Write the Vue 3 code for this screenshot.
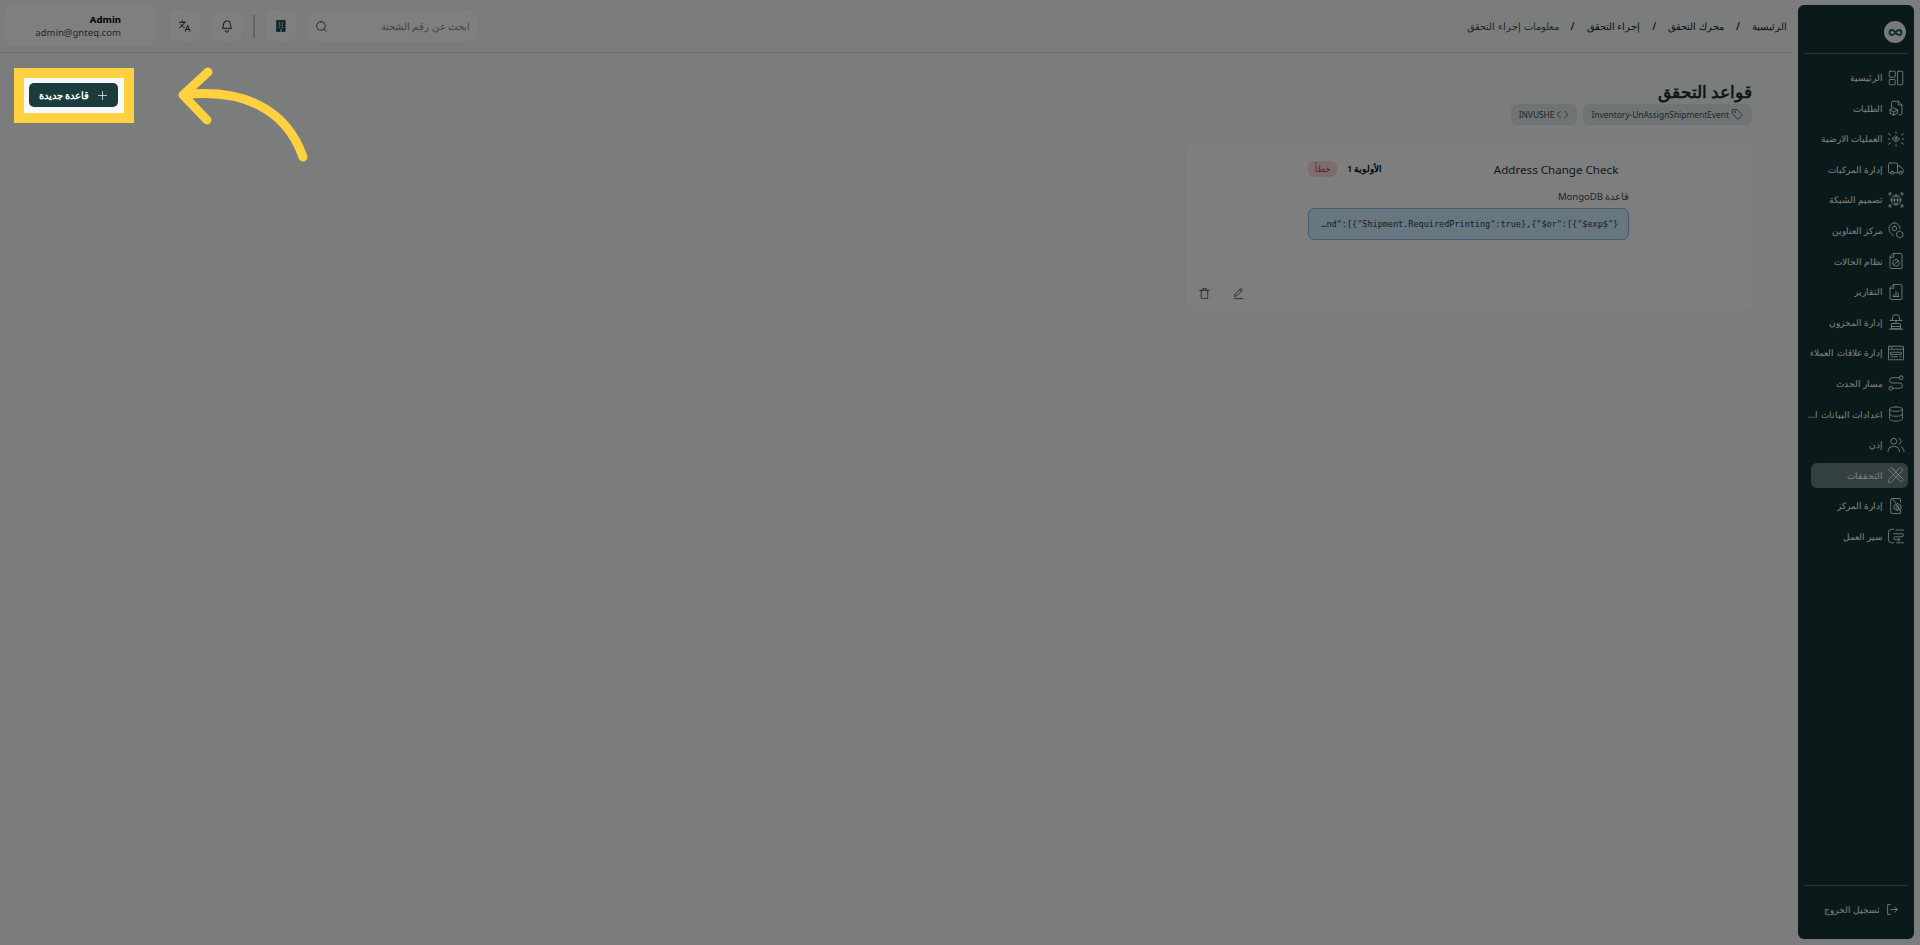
<script setup>
const menu = [
  { label: "الرئيسية", d: "M4 3h6a1 1 0 0 1 1 1v6a1 1 0 0 1-1 1H4a1 1 0 0 1-1-1V4a1 1 0 0 1 1-1zM4 14h6a1 1 0 0 1 1 1v5a1 1 0 0 1-1 1H4a1 1 0 0 1-1-1v-5a1 1 0 0 1 1-1zM15 3h5a1 1 0 0 1 1 1v16a1 1 0 0 1-1 1h-5a1 1 0 0 1-1-1V4a1 1 0 0 1 1-1z" },
  { label: "الطلبات", d: "M6 11V5a2 2 0 0 1 2-2h7l5 5v11a2 2 0 0 1-2 2h-2M15 3v5h5M9 12l5 2.500v4.500l-5 2.500-5-2.500v-4.500zM4 14.500l5 2.500 5-2.500M9 17v4.500" },
  { label: "العمليات الارضية", d: "M12 8l5 4-5 4-5-4zM12 10.500a1.500 1.500 0 1 0 0 3 1.500 1.500 0 0 0 0-3zM2 5l3 2M22 5l-3 2M2 19l3-2M22 19l-3-2M2 12h1.500M20.500 12H22M12 2.500v2M12 19.500v2" },
  { label: "إدارة المركبات", d: "M4 4h9a1 1 0 0 1 1 1v12H9M5 17H3.500A1.500 1.500 0 0 1 2 15.500V6a2 2 0 0 1 2-2M14 8h3.500l4 5v4H20M16 17h-2M7 15a2 2 0 1 0 0 4 2 2 0 0 0 0-4zM18 15a2 2 0 1 0 0 4 2 2 0 0 0 0-4z" },
  { label: "تصميم الشبكة", d: "M12 5.500a6.500 6.500 0 1 0 0 13 6.500 6.500 0 0 0 0-13zM5.500 12h13M12 5.500c-3.500 4-3.500 9 0 13M12 5.500c3.500 4 3.500 9 0 13M4 2.500a1.500 1.500 0 1 0 0 3 1.500 1.500 0 0 0 0-3zM20 2.500a1.500 1.500 0 1 0 0 3 1.500 1.500 0 0 0 0-3zM4 18.500a1.500 1.500 0 1 0 0 3 1.500 1.500 0 0 0 0-3zM20 18.500a1.500 1.500 0 1 0 0 3 1.500 1.500 0 0 0 0-3z" },
  { label: "مركز العناوين", d: "M10 2.500a7.500 7.500 0 0 0-7.500 7.500c0 4 3 7 6 9.500M17.500 10A7.500 7.500 0 0 0 10 2.500M10 7a3 3 0 1 0 0 6 3 3 0 0 0 0-6zM17 13.500l4 2.300v4.400l-4 2.300-4-2.300v-4.400z" },
  { label: "نظام الحالات", d: "M9 2h10a1 1 0 0 1 1 1v18a1 1 0 0 1-1 1H5a1 1 0 0 1-1-1V7zM9 2v5H4M12 10a4.500 4.500 0 1 0 0 9 4.500 4.500 0 0 0 0-9zM9 17l6-5" },
  { label: "التقارير", d: "M9 2h9a2 2 0 0 1 2 2v16a2 2 0 0 1-2 2H6a2 2 0 0 1-2-2V7zM9 2v5H4M8 18h8M9 15.500V18M12 11v7M15 13.500V18" },
  { label: "إدارة المخزون", d: "M7 10V7a5 5 0 0 1 10 0v3M4 10h16M12 10v3M7 14h10a1 1 0 0 1 1 1v6H6v-6a1 1 0 0 1 1-1zM6 18h12M3 21.500h18" },
  { label: "إدارة علاقات العملاء", d: "M3 3h18a1 1 0 0 1 1 1v16a1 1 0 0 1-1 1H3a1 1 0 0 1-1-1V4a1 1 0 0 1 1-1zM2 7h20M6 5h1M5 11h14v3H5zM5 17h9M17 17h2" },
  { label: "مسار الحدث", d: "M19 2.500a2.500 2.500 0 1 0 0 5 2.500 2.500 0 0 0 0-5zM5 16.500a2.500 2.500 0 1 0 0 5 2.500 2.500 0 0 0 0-5zM16.500 5H7a3.500 3.500 0 0 0 0 7h10a3.500 3.500 0 0 1 0 7H7.500" },
  { label: "اعدادات البيانات الرئيسية", d: "M12 2.500c-4.700 0-8.500 1.300-8.500 3s3.800 3 8.500 3 8.500-1.300 8.500-3-3.800-3-8.500-3zM3.500 5.500v13c0 1.700 3.800 3 8.500 3s8.500-1.300 8.500-3v-13M3.500 12c0 1.700 3.800 3 8.500 3s8.500-1.300 8.500-3" },
  { label: "إذن", d: "M9 3a4 4 0 1 0 0 8 4 4 0 0 0 0-8zM1.500 21v-2a6 6 0 0 1 6-5h3a6 6 0 0 1 6 5v2M16 3.200a4 4 0 0 1 0 7.600M19 14.500a6 6 0 0 1 3.500 4.500v2" },
  { label: "التحققات", active: true, d: "M6 2l16 16-3.500 3.500L2.500 5.500zM18 2l3.500 3.500L5.500 21.500 2 22l.5-3.500zM9 5l-2 2M12 8l-2 2M15 11l-2 2M18 14l-2 2" },
  { label: "إدارة المركز", d: "M7 2h9a2 2 0 0 1 2 2v3M18 19v1a2 2 0 0 1-2 2H7a2 2 0 0 1-2-2V4a2 2 0 0 1 2-2zM15 9l1 1.700 2-.2 1 1.500-1 1.500.9 1.500-1 1.500-2-.2-.9 1.700h-2l-1-1.700-2 .2-1-1.500.9-1.500-.9-1.500 1-1.500 2 .2 1-1.700zM14 12a2 2 0 1 0 0 4 2 2 0 0 0 0-4z" },
  { label: "سير العمل", d: "M9 3H6a4 4 0 0 0-4 4v10a4 4 0 0 0 4 4h3M12 4h10M9 9h11a2 2 0 0 1 0 4H11a2 2 0 0 0 0 4h6M15 15l2 2-2 2M13 21h9" },
];

const crumbs = ["الرئيسية", "محرك التحقق", "إجراء التحقق"];
const ruleCode = '…nd":[{"Shipment.RequiredPrinting":true},{"$or":[{"$exp$"}';
</script>

<template>
  <div class="page" dir="rtl">
    <aside class="sidebar">
      <div class="logo-row">
        <span class="logo">
          <svg viewBox="0 0 24 24" width="15" height="15"><path d="M12 12c-2-3-3.500-4-5.500-4a4 4 0 0 0 0 8c2 0 3.500-1 5.500-4s3.500-4 5.500-4a4 4 0 0 1 0 8c-2 0-3.500-1-5.500-4z" /></svg>
        </span>
      </div>

      <nav class="menu">
        <a v-for="item in menu" :key="item.label" class="menu-item" :class="{ active: item.active }">
          <svg class="menu-icon" viewBox="0 0 24 24"><path :d="item.d" /></svg>
          <span class="menu-label">{{ item.label }}</span>
        </a>
      </nav>

      <div class="logout">
        <svg class="logout-icon" viewBox="0 0 24 24"><path d="M8 3H3v18h5M9 12h12M16 7l5 5-5 5" /></svg>
        <span>تسجيل الخروج</span>
      </div>
    </aside>

    <main class="main">
      <header class="topbar">
        <ol class="crumbs">
          <template v-for="c in crumbs" :key="c">
            <li>{{ c }}</li>
            <li class="sep">/</li>
          </template>
          <li class="current">معلومات إجراء التحقق</li>
        </ol>

        <div class="tools">
          <label class="search">
            <span class="placeholder">ابحث عن رقم الشحنة</span>
            <svg class="search-icon" viewBox="0 0 24 24"><path d="M11 3a8 8 0 1 0 0 16 8 8 0 0 0 0-16zM21 21l-4.300-4.300" /></svg>
          </label>
          <button class="tool teal">
            <svg viewBox="0 0 24 24"><path class="solid" d="M5 2.500h14v19H5z" /><path class="windows" d="M9 6.500h1M14 6.500h1M9 10.500h1M14 10.500h1M9 14.500h1M14 14.500h1M12 18v3" /></svg>
          </button>
          <span class="tool-sep"></span>
          <button class="tool">
            <svg viewBox="0 0 24 24"><path d="M6 9a6 6 0 0 1 12 0c0 5 2 7 2 7H4s2-2 2-7zM9 19.500a3 3 0 0 0 6 0" /></svg>
          </button>
          <button class="tool">
            <svg viewBox="0 0 24 24"><path d="M2.500 5.500h10M7.500 3v2.500M11 5.500c-1 4-4 7.500-8 9M5 9c1 2.500 3 4.500 6 5.500M12.500 21l4-10 4 10M14 18h5" /></svg>
          </button>
          <div class="user">
            <strong>Admin</strong>
            <span>admin@gnteq.com</span>
          </div>
        </div>
      </header>

      <section class="content">
        <div class="head">
          <div class="head-text">
            <h1>قواعد التحقق</h1>
            <div class="chips">
              <span class="chip">
                <svg viewBox="0 0 24 24"><path d="M3 3h8l10 10-8 8L3 11zM7.500 6.500a1 1 0 1 0 0 2 1 1 0 0 0 0-2z" /></svg>
                <span>Inventory-UnAssignShipmentEvent</span>
              </span>
              <span class="chip">
                <svg viewBox="0 0 24 24"><path d="M8 6l-6 6 6 6M16 6l6 6-6 6" /></svg>
                <span>INVUSHE</span>
              </span>
            </div>
          </div>
          <button class="new-rule">
            <svg viewBox="0 0 24 24"><path d="M12 3v18M3 12h18" /></svg>
            <span>قاعدة جديدة</span>
          </button>
        </div>

        <div class="cards">
          <article class="card">
            <div class="card-body">
              <div class="card-head">
                <h2>Address Change Check</h2>
                <span class="priority">الأولوية 1</span>
                <span class="badge">خطأ</span>
              </div>
              <p class="rule-label">قاعدة MongoDB</p>
              <div class="code" dir="ltr">{{ ruleCode }}</div>
            </div>
            <footer class="card-foot">
              <button class="icon-btn">
                <svg viewBox="0 0 24 24"><path d="M4 21.500h16M5 17l1-4L16.500 2.500l3 3L9 16zM14 5l3 3" /></svg>
              </button>
              <button class="icon-btn">
                <svg viewBox="0 0 24 24"><path d="M3 6h18M9 6V3h6v3M6 6v15h12V6" /></svg>
              </button>
            </footer>
          </article>
        </div>
      </section>
    </main>

    <!-- tour step: dimmed page, spotlight over the button, pointer arrow -->
    <div class="spotlight"></div>
    <svg class="arrow" width="160" height="120" viewBox="0 0 160 120">
      <path d="M32 8L7 31l24 25M7 31c58-7 103 13 120 62" />
    </svg>
  </div>
</template>

<style>
html,
body {
  margin: 0;
  overflow: hidden;
}
</style>

<style scoped>
.page {
  position: relative;
  display: flex;
  height: 945px;
  overflow: hidden;
  background: #f7f9f8;
  color: #173234;
  font-family: "Noto Sans", sans-serif;
}

svg {
  fill: none;
  stroke: currentColor;
  stroke-width: 1.6;
  stroke-linecap: round;
  stroke-linejoin: round;
}

button {
  font-family: inherit;
  border: 0;
  padding: 0;
}

/* sidebar */
.sidebar {
  flex: none;
  display: flex;
  flex-direction: column;
  width: 116px;
  height: 934px;
  margin: 5px 6px 0 5px;
  box-sizing: border-box;
  padding: 0 6px;
  background: #143437;
  border-radius: 6px;
  color: #fff;
}

.logo-row {
  display: flex;
  justify-content: flex-start;
  height: 49px;
  box-sizing: border-box;
  padding: 16px 2px 0;
  border-bottom: 1px solid #55696b;
}

.logo {
  display: flex;
  align-items: center;
  justify-content: center;
  width: 22px;
  height: 22px;
  border-radius: 50%;
  background: #f2f2f2;
  color: #1f5d68;
}

.logo svg {
  stroke-width: 3;
}

.menu {
  flex: 1;
  display: flex;
  flex-direction: column;
  gap: 5.600px;
  padding: 11px 0 0 1px;
}

.menu-item {
  display: flex;
  align-items: center;
  gap: 4px;
  height: 25px;
  padding: 0 3px 0 0;
  border-radius: 6px;
  font-size: 9.100px;
  font-weight: 500;
}

.menu-item.active {
  margin-left: 6px;
  background: #687e7e;
}

.menu-icon {
  flex: none;
  width: 18px;
  height: 18px;
  stroke-width: 1.150;
}

.menu-label {
  min-width: 0;
  max-width: 76px;
  white-space: nowrap;
  overflow: hidden;
  text-overflow: ellipsis;
}

.logout {
  display: flex;
  align-items: center;
  gap: 6px;
  height: 47px;
  margin-bottom: 6px;
  padding-right: 9px;
  border-top: 1px solid #55696b;
  font-size: 9.400px;
  font-weight: 500;
}

.logout-icon {
  width: 13px;
  height: 13px;
  stroke-width: 1.600;
}

/* top bar */
.main {
  flex: 1;
  min-width: 0;
}

.topbar {
  display: flex;
  align-items: center;
  justify-content: space-between;
  height: 53px;
  box-sizing: border-box;
  padding: 0 6px 0 5px;
  border-bottom: 1px solid #d7dcdc;
}

.crumbs {
  display: flex;
  align-items: center;
  gap: 12px;
  margin: 0;
  padding: 0;
  list-style: none;
  font-size: 10.400px;
  font-weight: 500;
  color: #102a2c;
}

.crumbs .current {
  font-weight: 400;
  color: #3c5052;
}

.tools {
  display: flex;
  align-items: center;
  gap: 10px;
}

.search {
  display: flex;
  align-items: center;
  justify-content: space-between;
  width: 171px;
  height: 32px;
  box-sizing: border-box;
  padding: 0 8px;
  border-radius: 9px;
  background: #fff;
  box-shadow: 0 0 3px rgba(0, 0, 0, 0.05);
  font-size: 9.500px;
  color: #7f8b8c;
}

.search-icon {
  width: 13px;
  height: 13px;
  color: #1b4a55;
}

.tool {
  display: flex;
  align-items: center;
  justify-content: center;
  width: 32px;
  height: 32px;
  border-radius: 9px;
  background: #fff;
  box-shadow: 0 0 3px rgba(0, 0, 0, 0.05);
  color: #000;
}

.tool svg {
  width: 14px;
  height: 14px;
  stroke-width: 1.400;
}

.tool.teal {
  color: #1b4a55;
}

.solid {
  fill: currentColor;
}

.tool .windows {
  stroke: #fff;
  stroke-width: 2;
}

.tool-sep {
  width: 2px;
  height: 23px;
  background: #c5cad0;
}

.user {
  display: flex;
  flex-direction: column;
  justify-content: center;
  width: 152px;
  height: 42px;
  box-sizing: border-box;
  padding-right: 36px;
  margin-right: 2px;
  border-radius: 9px;
  background: #fff;
  box-shadow: 0 0 3px rgba(0, 0, 0, 0.05);
  line-height: 13px;
}

.user strong {
  font-size: 9.600px;
  font-weight: 700;
  color: #000;
}

.user span {
  font-size: 9.600px;
  color: #40545a;
}

/* content */
.content {
  padding: 26px 41px 0 29px;
}

.head {
  display: flex;
  align-items: flex-start;
  justify-content: space-between;
}

h1 {
  margin: 0;
  font-size: 17px;
  line-height: 25px;
  font-weight: 700;
  color: #183436;
}

.chips {
  display: flex;
  gap: 6px;
}

.chip {
  display: flex;
  align-items: center;
  gap: 2px;
  height: 21px;
  padding: 0 8px;
  border-radius: 6px;
  background: #e1e8e8;
  font-size: 8.400px;
  color: #3a4e55;
}

.chip svg {
  width: 13px;
  height: 13px;
  stroke-width: 1.500;
}

.new-rule {
  display: flex;
  align-items: center;
  justify-content: center;
  gap: 8px;
  width: 89px;
  height: 24px;
  margin-top: 4px;
  border-radius: 5px;
  background: #1a3c3d;
  color: #fff;
  font-size: 9.600px;
  font-weight: 700;
}

.new-rule svg {
  width: 11px;
  height: 11px;
  stroke-width: 1.500;
}

.cards {
  display: grid;
  grid-template-columns: repeat(3, 1fr);
  gap: 12px;
  margin-top: 18px;
}

.card {
  height: 166px;
  display: flex;
  flex-direction: column;
  border-radius: 6px;
  background: #fdfdfd;
  box-shadow: 0 0 2px rgba(0, 0, 0, 0.08);
}

.card-body {
  flex: 1;
  width: 321px;
  margin: 0 auto;
  padding-top: 15px;
}

.card-head {
  display: flex;
  align-items: center;
  height: 22px;
}

h2 {
  flex: 1;
  margin: 0;
  padding-right: 11px;
  font-size: 11.600px;
  font-weight: 400;
  color: #183436;
}

.priority {
  margin-left: 10px;
  padding-bottom: 2px;
  font-size: 8.500px;
  font-weight: 600;
  color: #000;
}

.badge {
  width: 29px;
  height: 16px;
  border-radius: 6px;
  background: #fbdcdc;
  color: #d62b2b;
  font-size: 9px;
  line-height: 16px;
  text-align: center;
}

.rule-label {
  margin: 9px 0 4px;
  font-size: 9.500px;
  line-height: 15px;
  color: #3a4e55;
}

.code {
  height: 32px;
  box-sizing: border-box;
  padding: 0 12px;
  border: 1px solid #8ab8ea;
  border-radius: 6px;
  background: #d0ecff;
  color: #1b3b66;
  font-family: "DejaVu Sans Mono", monospace;
  font-size: 8.500px;
  line-height: 30px;
  white-space: nowrap;
  overflow: hidden;
}

.card-foot {
  display: flex;
  justify-content: flex-end;
  align-items: center;
  gap: 21px;
  height: 37px;
  margin: 0 6px;
  padding: 4px 6px 0;
  box-sizing: border-box;
  border-top: 1px solid #f5f6f6;
}

.icon-btn {
  display: flex;
  width: 13px;
  height: 13px;
  background: none;
  color: #3a4e55;
}

.icon-btn svg {
  width: 13px;
  height: 13px;
}

/* tour overlay */
.spotlight {
  position: absolute;
  left: 14px;
  top: 68px;
  width: 100px;
  height: 35px;
  border: 10px solid #ffd040;
  box-shadow: 0 0 0 3000px rgba(0, 0, 0, 0.5);
}

.arrow {
  position: absolute;
  left: 176px;
  top: 64px;
  color: #ffd040;
  stroke-width: 9;
}
</style>
